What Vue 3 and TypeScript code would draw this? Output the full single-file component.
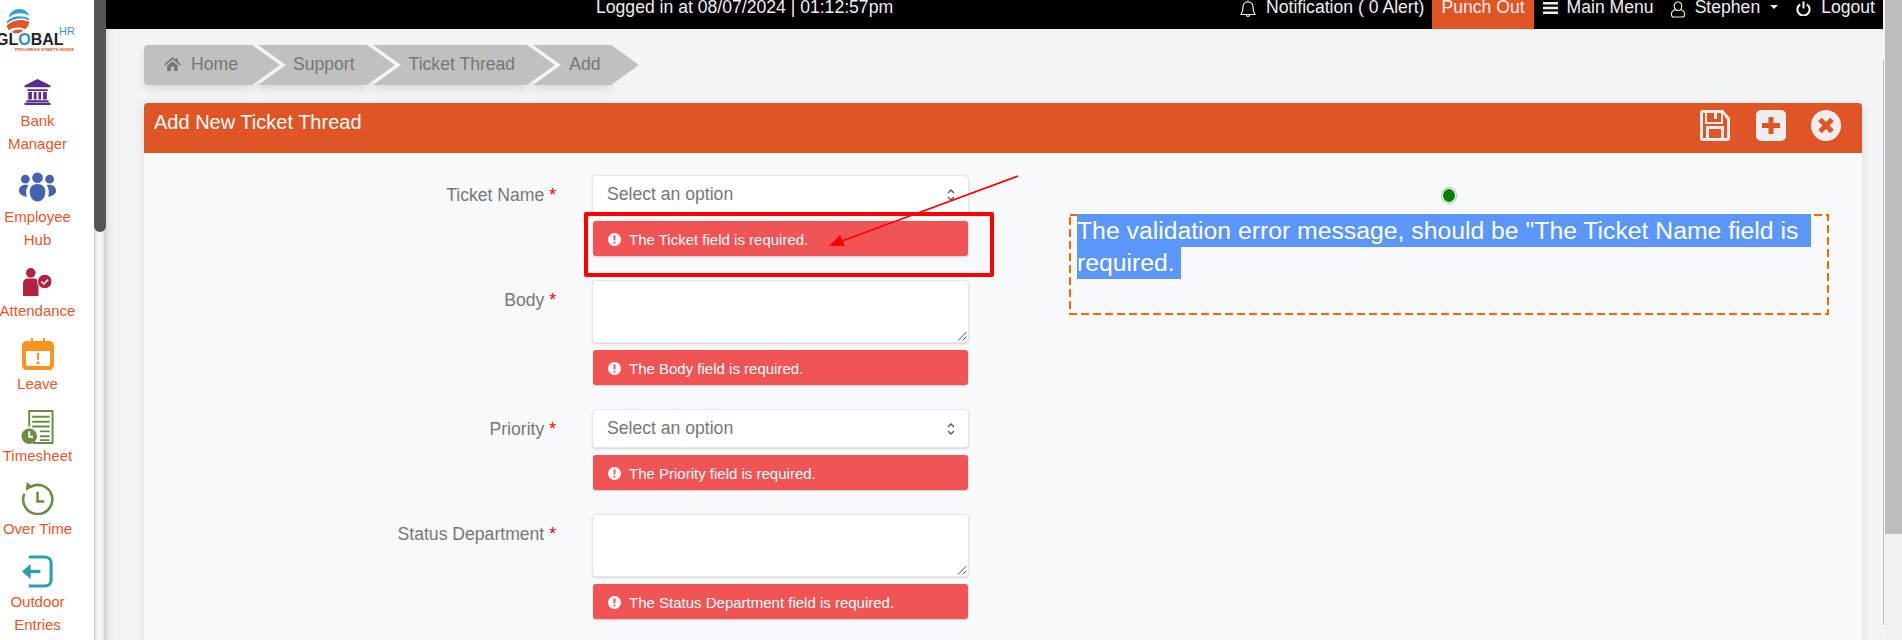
<script setup lang="ts">
interface Field { label: string; kind: 'select' | 'area'; error: string }
const fields: Field[] = [
  { label: 'Ticket Name', kind: 'select', error: 'The Ticket field is required.' },
  { label: 'Body', kind: 'area', error: 'The Body field is required.' },
  { label: 'Priority', kind: 'select', error: 'The Priority field is required.' },
  { label: 'Status Department', kind: 'area', error: 'The Status Department field is required.' }
]
const crumbs = ['Support', 'Ticket Thread', 'Add']
</script>

<template>
  <div class="shell">
    <aside class="side">
      <div class="logo">
        <svg class="globe" viewBox="0 0 26 26" width="25" height="25">
          <path d="M4 9C5 3 10 0 15 0c5 0 9 3 10 7C18 3 9 4 4 9z" fill="#2f9fd8" />
          <path d="M2 13C7 7 18 6 25 10v2C18 8 8 10 2 15z" fill="#2f9fd8" />
          <path d="M2 17c6-6 16-7 23-4 0 4-2 7-4 8-5-3-13-2-17 1-1-1-2-3-2-5z" fill="#e2562a" />
          <path d="M7 24c4-3 9-3 12-2-4 4-9 4-12 2z" fill="#e2562a" />
        </svg>
        <div class="brand">GL<span class="brand-o">O</span>BAL</div>
        <div class="brand-hr">HR</div>
        <div class="tag">PROGRESS STARTS INSIDE</div>
      </div>
      <nav class="menu">
        <div class="item i-bank">
          <svg viewBox="0 0 30 28" width="29" height="26"><path fill="#5b2d91" d="M15 0 29 7v2H1V7zM4 11h22v2H4zM5 14h4v8H5zM11 14h3v8h-3zM16 14h3v8h-3zM21 14h4v8h-4zM3 23h24v2H3zM1 25.500h28V28H1z" /></svg>
          <span>Bank<br />Manager</span>
        </div>
        <div class="item i-emp">
          <svg viewBox="0 0 38 30" width="37" height="30"><g fill="#4564ae"><circle cx="19" cy="5.500" r="5.500" /><circle cx="6.500" cy="7" r="4.500" /><circle cx="31.500" cy="7" r="4.500" /><path d="M11 20c0-5 3-8 8-8s8 3 8 8-3 10-8 10-8-5-8-10z" /><path d="M9.500 13C4 12 0 14 0 19c0 3 3 5 8 6-1-4-1-8 1.500-12zM28.500 13c5.500-1 9.500 1 9.500 6 0 3-3 5-8 6 1-4 1-8-1.500-12z" /></g></svg>
          <span>Employee<br />Hub</span>
        </div>
        <div class="item i-att">
          <svg viewBox="0 0 30 29" width="29" height="28"><g fill="#b0223f"><circle cx="8" cy="5" r="5" /><path d="M0 29V16c0-3 2-5 5-5h6c3 0 5 2 5 5v13z" /><circle cx="22.500" cy="14" r="7.500" stroke="#fff" stroke-width="1" /></g><path d="m19 14 2.500 2.500 4.500-4.500" fill="none" stroke="#fff" stroke-width="1.600" /></svg>
          <span>Attendance</span>
        </div>
        <div class="item i-leave">
          <svg viewBox="0 0 32 32" width="32" height="32"><path fill="#f9951f" d="M9 0h2v3h10V0h2v3h4c3 0 5 2 5 5v19c0 3-2 5-5 5H5c-3 0-5-2-5-5V8c0-3 2-5 5-5h4z" /><path fill="#fff" d="M4 13h24v13c0 1-1 2-2 2H6c-1 0-2-1-2-2z" /><path fill="#f9951f" d="M14.700 15h2.600l-.5 7h-1.600zM14.700 23.500h2.600v2.600h-2.600z" /></svg>
          <span>Leave</span>
        </div>
        <div class="item i-time">
          <svg viewBox="0 0 33 35" width="33" height="34"><path fill="#6a8d45" d="M7 0h26v35H12v-2h19V2H9v15H7z" /><path fill="#6a8d45" d="M11 6h18v2H11zM11 11h18v2H11zM11 16h18v2H11zM19 21h10v2H19zM19 26h10v2H19zM19 30h10v2H19z" /><circle cx="8" cy="27" r="8" fill="#6a8d45" /><path d="M8 22v5.500h4" fill="none" stroke="#fff" stroke-width="2" /></svg>
          <span>Timesheet</span>
        </div>
        <div class="item i-over">
          <svg viewBox="0 0 34 34" width="33" height="33"><g fill="none" stroke="#6a8d45" stroke-width="2.600"><path d="M9 5.500A15 15 0 1 1 3.500 12" /><path d="M17 10v10h7" /></g><path fill="#6a8d45" d="m6 0 6 5-7 4z" /></svg>
          <span>Over Time</span>
        </div>
        <div class="item i-out">
          <svg viewBox="0 0 34 34" width="33" height="33"><path d="M8 2h16c4 0 7 2 7 6v18c0 4-3 6-7 6H8" fill="none" stroke="#2aa3a8" stroke-width="3.200" /><path d="M20 17H7" stroke="#2aa3a8" stroke-width="3.400" fill="none" /><path fill="#2aa3a8" d="m1 17 9-8v16z" /></svg>
          <span>Outdoor<br />Entries</span>
        </div>
      </nav>
    </aside>
    <div class="side-bar"><div class="side-thumb"></div></div>

    <div class="main">
      <header class="top">
        <div class="login">Logged in at 08/07/2024 | 01:12:57pm</div>
        <div class="top-links">
          <span class="tl t-note">
            <svg viewBox="0 0 16 18" width="16" height="18"><path fill="none" stroke="#eee" stroke-width="1.200" d="M8 2c3 0 5 2 5 5 0 4 1 6 2 7.500H1C2 13 3 11 3 7c0-3 2-5 5-5zM6.500 15c0 2 3 2 3 0M8 .5V2" /></svg>
            Notification ( 0 Alert)
          </span>
          <span class="punch">Punch Out</span>
          <span class="tl t-menu">
            <svg viewBox="0 0 15 12" width="15" height="12"><path fill="#eee" d="M0 0h15v2.400H0zM0 4.800h15v2.400H0zM0 9.600h15V12H0z" /></svg>
            Main Menu
          </span>
          <span class="tl t-user">
            <svg viewBox="0 0 16 18" width="16" height="17"><path fill="none" stroke="#eee" stroke-width="1.200" d="M8 1c2.500 0 4 2 4 4.500S10.500 10 8 10 4 8 4 5.500 5.500 1 8 1zM5 9c-2.500 1-4 2-4 5 0 2 1 3 2.500 3h9c1.500 0 2.500-1 2.500-3 0-3-1.500-4-4-5" /></svg>
            Stephen
            <i class="caret"></i>
          </span>
          <span class="tl t-out">
            <svg viewBox="0 0 16 16" width="15" height="15"><path fill="none" stroke="#eee" stroke-width="2.200" d="M4.500 3.500a6.500 6.500 0 1 0 7 0M8 .5V8" /></svg>
            Logout
          </span>
        </div>
      </header>

      <div class="content">
        <ol class="crumbs">
          <li class="crumb crumb-home">
            <svg viewBox="0 0 16 13" width="17" height="14"><path fill="#777" d="M8 0l3 2.500V1h2v3.200L16 7l-1 1-7-6-7 6-1-1zM3 8l5-4 5 4v5H9.500V9h-3v4H3z" /></svg>
            <span>Home</span>
          </li>
          <li v-for="c in crumbs" :key="c" class="crumb">{{ c }}</li>
        </ol>

        <section class="panel">
          <div class="panel-head">
            <h2>Add New Ticket Thread</h2>
            <div class="tools">
              <svg viewBox="0 0 30 31" width="30" height="31"><path fill="#eee" fill-rule="evenodd" d="M3 0h20l7 8v20c0 2-1 3-3 3H3c-2 0-3-1-3-3V3c0-2 1-3 3-3zM7 3v9h14V3h-4v6h-3V3zM3 3v25h3V16h18v12h3V9.500L23 4v10H5V3zM9 19v9h12v-9z" /></svg>
              <svg viewBox="0 0 30 31" width="30" height="31"><rect width="30" height="31" rx="5" fill="#eee" /><path fill="#e05525" d="M12.500 7h5v6h6.500v5h-6.500v6h-5v-6H6v-5h6.500z" /></svg>
              <svg viewBox="0 0 30 31" width="30" height="31"><ellipse cx="15" cy="15.500" rx="15" ry="15.500" fill="#eee" /><path stroke="#e05525" stroke-width="5" d="m9 9.500 12 12M21 9.500l-12 12" /></svg>
            </div>
          </div>
          <div class="panel-body">
            <div v-for="f in fields" :key="f.label" class="row">
              <label class="lbl">{{ f.label }} <b>*</b></label>
              <div class="ctl">
                <div v-if="f.kind === 'select'" class="sel">
                  <span>Select an option</span>
                  <svg viewBox="0 0 8 14" width="8" height="14"><path fill="none" stroke="#555" stroke-width="1.300" d="m1 5 3-3 3 3M1 9l3 3 3-3" /></svg>
                </div>
                <div v-else class="area">
                  <svg viewBox="0 0 10 10" width="10" height="10"><path stroke="#555" d="M1 9.500 9.500 1M5.500 9.500l4-4" /></svg>
                </div>
                <div class="err">
                  <svg viewBox="0 0 14 14" width="13" height="13"><circle cx="7" cy="7" r="7" fill="#fff" /><path fill="#f05454" d="M5.800 2.600h2.400l-.3 5.600H6.100zM5.900 9.300h2.200v2.100H5.900z" /></svg>
                  {{ f.error }}
                </div>
              </div>
            </div>
          </div>
        </section>
      </div>

      <div class="track-line"></div>
      <div class="mark-box"></div>
      <svg class="arrow" viewBox="0 0 200 80" width="200" height="80"><path d="M192 3 16 68" stroke="#f00" stroke-width="1.800" fill="none" /><path d="m3 73 11-11 5 11z" fill="#f00" /></svg>
      <div class="dot"></div>
      <div class="note">
        <svg class="note-frame" viewBox="0 0 760 101" width="760" height="101"><rect x="1" y="1" width="758" height="99" fill="none" stroke="#f60" stroke-width="2" stroke-dasharray="8 4" /></svg>
        <span class="sel-line first">The validation error message, should be "The Ticket Name field is</span>
        <span class="sel-line second">required.</span>
      </div>
    </div>

    <div class="page-bar"><div class="page-thumb"></div></div>
  </div>
</template>

<style>
html, body { margin: 0; overflow: hidden; }
</style>

<style scoped>
.shell { display: flex; width: 1902px; height: 640px; overflow: hidden; font-family: "Liberation Sans", Arial, sans-serif; }
.side { width: 94px; flex: none; background: #fff; overflow: hidden; }
.logo { position: relative; height: 70px; overflow: hidden; }
.globe { position: absolute; left: 5px; top: 9px; }
.brand { position: absolute; left: -4px; top: 34px; white-space: nowrap; color: #222; font-weight: 700; font-size: 16px; line-height: 11px; }
.brand-o { color: #2f8fd0; }
.brand-hr { position: absolute; left: 59px; top: 27px; color: #3f8fd0; font-size: 11px; font-weight: 400; line-height: 8px; }
.tag { position: absolute; left: 15px; top: 47px; white-space: nowrap; color: #e2562a; font-size: 4.400px; font-weight: 700; line-height: 5px; }
.menu { display: flex; flex-direction: column; width: 75px; color: #e9572b; font-size: 15px; line-height: 23px; text-align: center; padding-top: 9px; }
.item { display: flex; flex-direction: column; align-items: center; width: 75px; white-space: nowrap; }
.item svg { margin-bottom: 3px; flex: none; }
.i-bank svg { margin-bottom: 4px; }
.i-emp { margin-top: 17px; }
.i-att { margin-top: 17px; }
.i-leave { margin-top: 16px; }
.i-leave svg { margin-bottom: 2px; }
.i-time { margin-top: 15px; }
.i-time svg { margin-bottom: 0; }
.i-over { margin-top: 15px; }
.i-over svg { margin-bottom: 2px; }
.i-out { margin-top: 15px; }
.i-out svg { margin-bottom: 2px; }
.side-bar { width: 12px; flex: none; background: linear-gradient(90deg, #ccc, #f6f6f6 25%, #f6f6f6 65%, #ccc); }
.side-thumb { height: 232px; background: #555; border-radius: 0 0 6px 6px; }
.main { position: relative; flex: 1; min-width: 0; background: #f3f4f6; }
.top { position: relative; display: flex; justify-content: flex-end; height: 29px; margin-right: 2px; background: #000; color: #eee; font-size: 17.600px; line-height: 18px; }
.login { position: absolute; left: 490px; top: -2px; white-space: nowrap; color: #eee; }
.top-links { display: flex; align-items: flex-start; padding-right: 8px; }
.tl { display: flex; align-items: flex-start; white-space: nowrap; gap: 10px; margin-top: -2px; }
.t-note svg { margin-top: 2px; }
.t-menu { margin-left: 9px; gap: 9px; }
.t-menu svg { margin-top: 4px; }
.t-user { margin-left: 16px; gap: 9px; }
.t-user svg { margin-top: 3px; }
.t-out { margin-left: 18px; }
.t-out svg { margin-top: 3px; }
.caret { width: 0; height: 0; margin: 7px 0 0 1px; border: 4.500px solid transparent; border-top-color: #eee; border-bottom: 0; }
.punch { height: 29px; margin-left: 8px; padding: 0 9px; background: #e05525; color: #eee; box-sizing: border-box; line-height: 14px; white-space: nowrap; }
.content { padding: 16px 23px 0 38px; height: 611px; box-sizing: border-box; overflow: hidden; box-shadow: inset 8px 0 6px -5px rgba(0,0,0,.1); }
.crumbs { display: flex; list-style: none; margin: 0 0 18px; padding: 0; height: 40px; font-size: 17.600px; color: #777; }
.crumb { position: relative; display: flex; align-items: center; gap: 10px; height: 40px; box-sizing: border-box; padding: 0 12px 2px 35px; margin-right: 6px; background: #c0c0c0; white-space: nowrap; box-shadow: 0 5px 8px rgba(0,0,0,.1); }
.crumb:nth-child(3) { padding-left: 36px; }
.crumb:last-child { padding-left: 36px; padding-right: 11px; }
.crumb::after { content: ""; position: absolute; right: -28px; top: 0; z-index: 1; border-left: 28px solid #c0c0c0; border-top: 20px solid transparent; border-bottom: 20px solid transparent; }
.crumb::before { content: ""; position: absolute; left: 0; top: 0; border-left: 28px solid #f3f4f6; border-top: 20px solid transparent; border-bottom: 20px solid transparent; }
.crumb-home { padding: 0 14px 2px 20px; border-radius: 4px 0 0 4px; }
.crumb-home::before { display: none; }
.panel { background: #f8f9fb; border-radius: 4px 4px 0 0; box-shadow: 0 2px 12px rgba(0,0,0,.1); height: 560px; }
.panel-head { display: flex; justify-content: space-between; height: 50px; padding: 0 21px 0 10px; background: #e05525; border-radius: 4px 4px 0 0; }
.panel-head h2 { margin: 9px 0 0; color: #fff; font-size: 20px; font-weight: 400; line-height: 20px; }
.tools { display: flex; gap: 25.500px; padding-top: 7px; }
.panel-body { padding-top: 23px; }
.row { display: flex; align-items: flex-start; margin-bottom: 25px; }
.lbl { width: 412px; padding-top: 9px; text-align: right; color: #777; font-size: 17.600px; line-height: 20px; white-space: nowrap; }
.lbl b { color: #f00; font-weight: 400; }
.ctl { width: 375px; margin-left: 37px; }
.sel { display: flex; align-items: center; justify-content: space-between; height: 39px; margin: -1px -1px 0; box-sizing: border-box; padding: 0 13px 0 14px; background: #fff; border-radius: 4px; border: 1px solid #e6e6e6; box-shadow: 0 1px 2px rgba(0,0,0,.15); color: #777; font-size: 17.600px; }
.area { position: relative; height: 63px; margin: -1px -1px 0; box-sizing: border-box; background: #fff; border-radius: 4px; border: 1px solid #e6e6e6; box-shadow: 0 1px 2px rgba(0,0,0,.15); }
.area svg { position: absolute; right: 1px; bottom: 1px; }
.err { display: flex; align-items: center; gap: 8px; height: 35px; box-sizing: border-box; margin-top: 7px; padding: 1px 0 0 15px; background: #f05454; border-radius: 3px; box-shadow: 0 1px 2px rgba(0,0,0,.2); color: #fff; font-size: 15px; }
.track-line { position: absolute; right: 1px; top: 60px; width: 1px; height: 565px; background: #bbb; }
.mark-box { position: absolute; left: 478px; top: 212px; width: 410px; height: 65px; box-sizing: border-box; border: 4px solid #f00; border-radius: 2px; }
.arrow { position: absolute; left: 720px; top: 173px; }
.dot { position: absolute; left: 1336px; top: 188px; width: 14px; height: 15px; box-sizing: border-box; border: 1px solid #fff; box-shadow: 0 0 0 1px #bbb; border-radius: 50%; background: #008000; }
.note { position: absolute; left: 963px; top: 214px; width: 760px; height: 101px; box-sizing: border-box; padding-left: 8px; color: #fff; font-size: 24.750px; line-height: 32px; }
.note-frame { position: absolute; left: 0; top: 0; }
.sel-line { position: relative; display: block; height: 32px; background: #5b96fb; white-space: nowrap; }
.first { width: 734px; height: 33px; line-height: 33px; }
.second { width: 104px; }
.page-bar { width: 17px; flex: none; background: #f1f1f1; }
.page-thumb { height: 534px; background: #bdbdbd; }
</style>
